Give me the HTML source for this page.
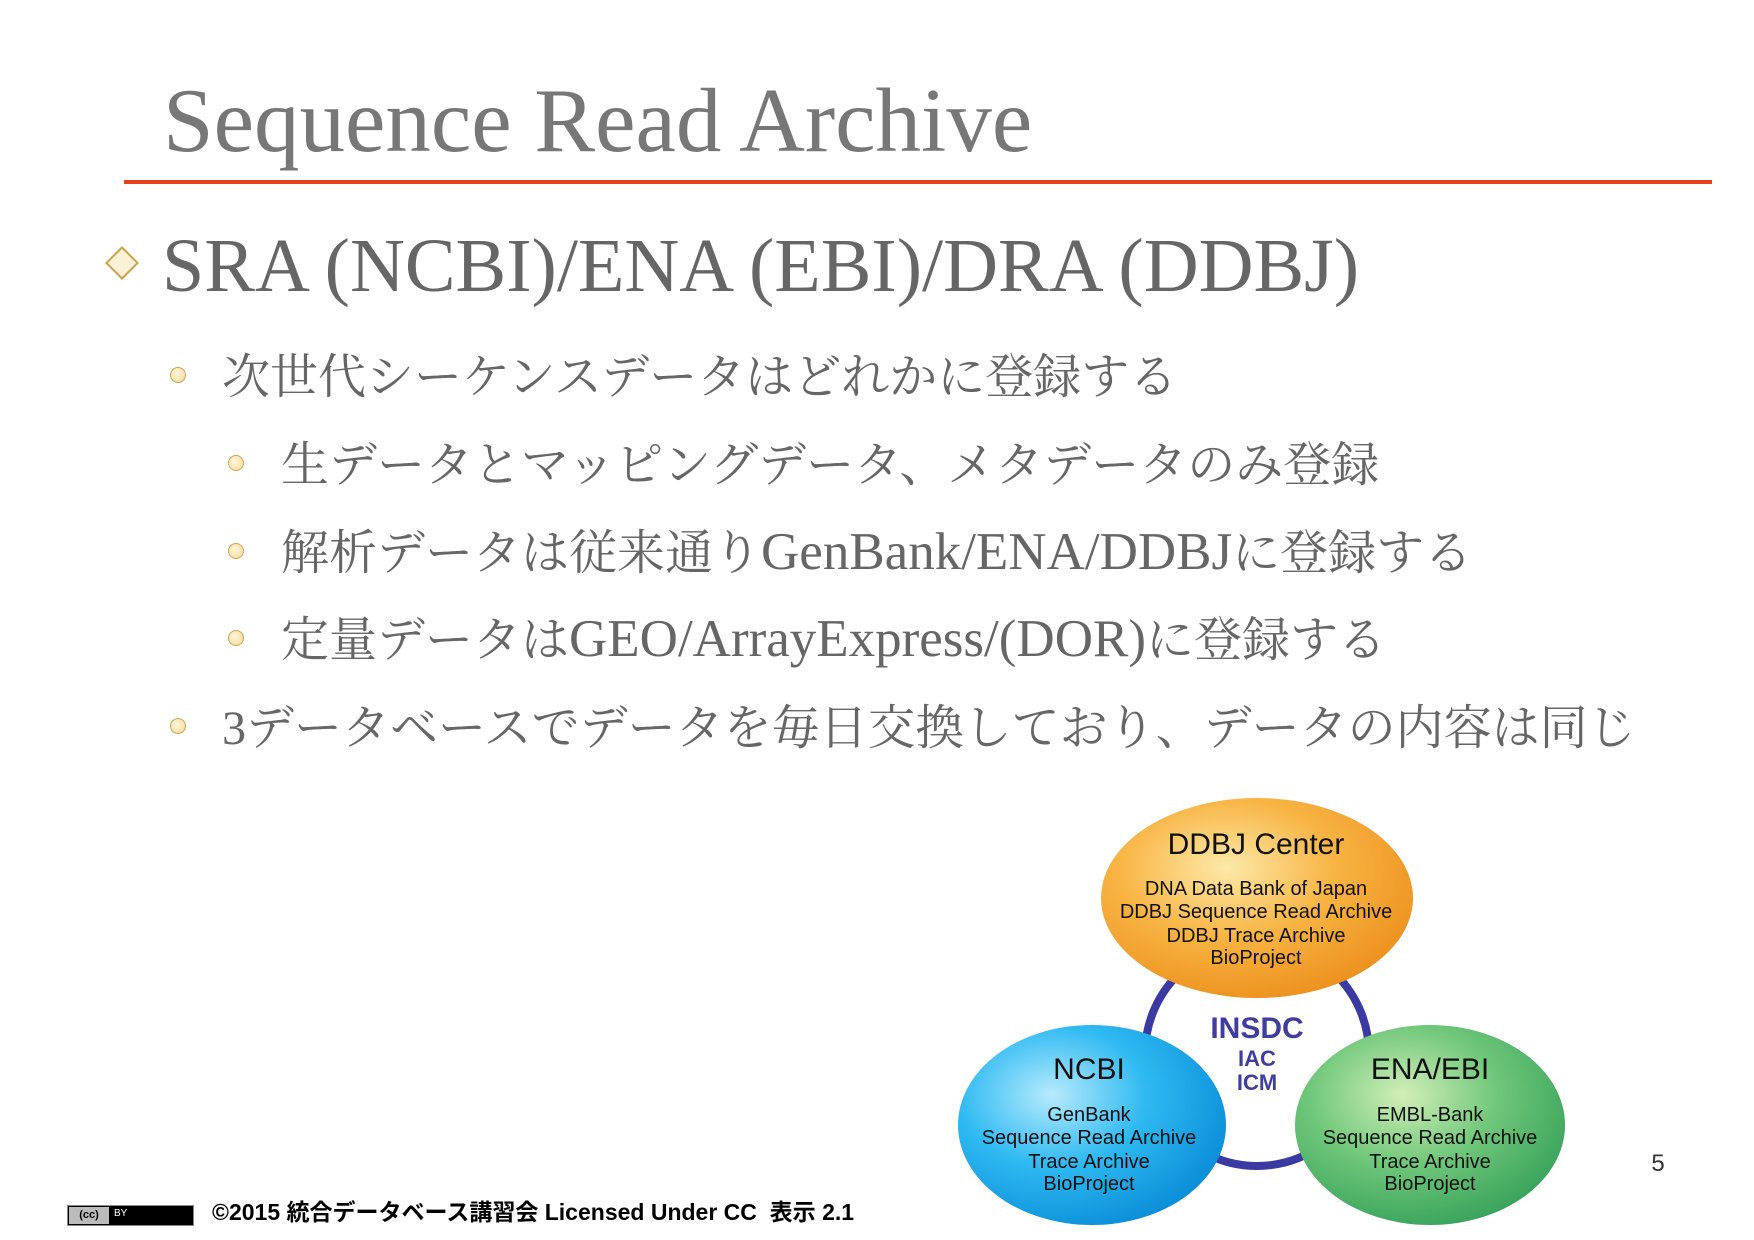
<!DOCTYPE html>
<html><head><meta charset="utf-8"><style>
html,body{margin:0;padding:0;background:#fff}
body{width:1754px;height:1240px;position:relative;overflow:hidden;font-family:"Liberation Serif","Noto Serif CJK JP","Noto Serif CJK SC",serif;color:#666}
.a{position:absolute;white-space:nowrap}
.b{position:absolute;width:14px;height:14px;border-radius:50%;background:radial-gradient(circle at 40% 40%,#fff6d8,#f3d79a);border:1.5px solid #c9a44f}
.l{font-size:53px}
</style></head><body>
<div class="a" style="left:163px;top:68px;font-size:91px;color:#777">Sequence Read Archive</div>
<div class="a" style="left:124px;top:180px;width:1588px;height:4px;background:#e8401c"></div>
<div class="a" style="left:110px;top:251px;width:20px;height:20px;border:2px solid #c9a44f;background:#fbf1d6;transform:rotate(45deg)"></div>
<div class="a" style="left:162px;top:223px;font-size:76px;color:#666">SRA (NCBI)/ENA (EBI)/DRA (DDBJ)</div>
<div class="b" style="left:170px;top:367px"></div>
<div class="a" style="left:222px;top:338px;font-size:48px">次世代シーケンスデータはどれかに登録する</div>
<div class="b" style="left:228px;top:455px"></div>
<div class="a" style="left:281px;top:426px;font-size:48px">生データとマッピングデータ、メタデータのみ登録</div>
<div class="b" style="left:228px;top:543px"></div>
<div class="a" style="left:281px;top:514px;font-size:48px">解析データは従来通り<span class="l">GenBank/ENA/DDBJ</span>に登録する</div>
<div class="b" style="left:228px;top:630px"></div>
<div class="a" style="left:281px;top:601px;font-size:48px">定量データは<span class="l">GEO/ArrayExpress/(DOR)</span>に登録する</div>
<div class="b" style="left:170px;top:718px"></div>
<div class="a" style="left:222px;top:689px;font-size:48px">3データベースでデータを毎日交換しており、データの内容は同じ</div>
<svg class="a" style="left:0;top:0" width="1754" height="1240" font-family="Liberation Sans, Arial, sans-serif" text-anchor="middle">
<defs>
<radialGradient id="go" cx="0.4" cy="0.35" r="0.7"><stop offset="0" stop-color="#fde9a8"/><stop offset="0.5" stop-color="#f8b443"/><stop offset="1" stop-color="#ec8f1c"/></radialGradient>
<radialGradient id="gb" cx="0.35" cy="0.35" r="0.7"><stop offset="0" stop-color="#b7ebfd"/><stop offset="0.5" stop-color="#2fbaf2"/><stop offset="1" stop-color="#0b8fd9"/></radialGradient>
<radialGradient id="gg" cx="0.4" cy="0.35" r="0.7"><stop offset="0" stop-color="#d2efb8"/><stop offset="0.5" stop-color="#6fc77a"/><stop offset="1" stop-color="#36a15a"/></radialGradient>
</defs>
<g transform="translate(-6,0)">
<circle cx="1263" cy="1054" r="112" fill="none" stroke="#3b3aa3" stroke-width="8"/>
<ellipse cx="1263" cy="898" rx="156" ry="100" fill="url(#go)"/>
<ellipse cx="1098" cy="1125" rx="134" ry="100" fill="url(#gb)"/>
<ellipse cx="1436" cy="1125" rx="135" ry="100" fill="url(#gg)"/>
<g fill="#111">
<text x="1262" y="854" font-size="30">DDBJ Center</text>
<text x="1262" y="895" font-size="20">DNA Data Bank of Japan</text>
<text x="1262" y="918" font-size="20">DDBJ Sequence Read Archive</text>
<text x="1262" y="942" font-size="20">DDBJ Trace Archive</text>
<text x="1262" y="964" font-size="20">BioProject</text>
<text x="1095" y="1079" font-size="30">NCBI</text>
<text x="1095" y="1121" font-size="20">GenBank</text>
<text x="1095" y="1144" font-size="20">Sequence Read Archive</text>
<text x="1095" y="1168" font-size="20">Trace Archive</text>
<text x="1095" y="1190" font-size="20">BioProject</text>
<text x="1436" y="1079" font-size="30">ENA/EBI</text>
<text x="1436" y="1121" font-size="20">EMBL-Bank</text>
<text x="1436" y="1144" font-size="20">Sequence Read Archive</text>
<text x="1436" y="1168" font-size="20">Trace Archive</text>
<text x="1436" y="1190" font-size="20">BioProject</text>
</g>
<g fill="#3f3d9e" font-weight="bold">
<text x="1263" y="1038" font-size="30">INSDC</text>
<text x="1263" y="1066" font-size="22">IAC</text>
<text x="1263" y="1090" font-size="22">ICM</text>
</g>
</g>
<text x="1666" y="1171" font-size="24" fill="#333" transform="translate(-8,0)">5</text>
</svg>
<div class="a" style="left:67px;top:1205px;width:127px;height:21px;background:#000;border:1px solid #888;box-sizing:border-box"><div style="position:absolute;left:1px;top:1px;width:40px;height:17px;background:#bbb;font:bold 11px 'Liberation Sans',sans-serif;color:#000;line-height:17px;text-align:center">(cc)</div><div style="position:absolute;left:46px;top:2px;font:10px 'Liberation Sans',sans-serif;color:#fff">BY</div></div>
<div class="a" style="left:212px;top:1193px;font:bold 23px 'Liberation Sans','Noto Sans CJK JP',sans-serif;color:#000">©2015 統合データベース講習会 Licensed Under CC&nbsp; 表示 2.1</div>
</body></html>
